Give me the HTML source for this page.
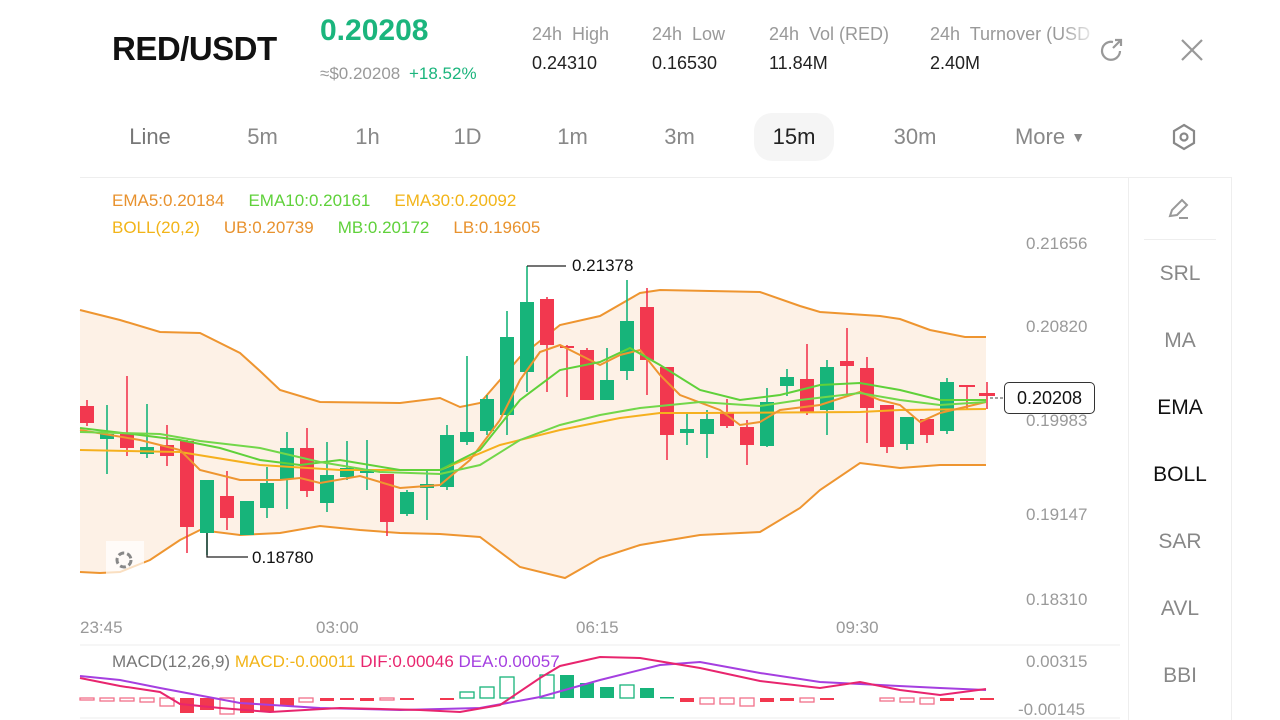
<!DOCTYPE html>
<html><head><meta charset="utf-8"><style>
*{margin:0;padding:0;box-sizing:border-box}
body{width:1280px;height:720px;overflow:hidden;background:#fff;font-family:"Liberation Sans",Arial,sans-serif;position:relative}
.a{position:absolute;white-space:nowrap}
.g{color:#999}
.tab{position:absolute;top:113px;height:48px;line-height:48px;font-size:22px;color:#888;text-align:center}
.side{position:absolute;left:1128px;width:104px;text-align:center;font-size:21px;color:#888}
.ax{position:absolute;left:1026px;font-size:17px;color:#9a9a9a}
</style></head><body>
<div class="a" style="left:112px;top:30px;font-size:33px;font-weight:bold;color:#111;letter-spacing:-0.5px">RED/USDT</div>
<div class="a" style="left:320px;top:14px;font-size:30px;font-weight:bold;color:#1bb57d">0.20208</div>
<div class="a g" style="left:320px;top:64px;font-size:17px">≈$0.20208 <span style="color:#1bb57d;margin-left:4px">+18.52%</span></div>
<div class="a g" style="left:532px;top:24px;font-size:18px">24h&nbsp; High</div>
<div class="a" style="left:532px;top:53px;font-size:18px;color:#222">0.24310</div>
<div class="a g" style="left:652px;top:24px;font-size:18px">24h&nbsp; Low</div>
<div class="a" style="left:652px;top:53px;font-size:18px;color:#222">0.16530</div>
<div class="a g" style="left:769px;top:24px;font-size:18px">24h&nbsp; Vol (RED)</div>
<div class="a" style="left:769px;top:53px;font-size:18px;color:#222">11.84M</div>
<div class="a g" style="left:930px;top:24px;font-size:18px;width:160px;overflow:hidden">24h&nbsp; Turnover (USDT)</div>
<div class="a" style="left:930px;top:53px;font-size:18px;color:#222">2.40M</div>
<div class="a" style="left:1060px;top:20px;width:40px;height:60px;background:linear-gradient(90deg,rgba(255,255,255,0),#fff)"></div>
<svg class="a" style="left:1098px;top:36px" width="28" height="28" viewBox="0 0 28 28" fill="none" stroke="#999" stroke-width="2.2"><path d="M22 15a9 9 0 1 1-7-9"/><path d="M15 12L23 4M17 4h6v6"/></svg>
<svg class="a" style="left:1180px;top:38px" width="24" height="24" viewBox="0 0 24 24" stroke="#999" stroke-width="2.2"><path d="M2 2L22 22M22 2L2 22"/></svg>

<div class="tab" style="left:120px;width:60px;color:#777">Line</div>
<div class="tab" style="left:235px;width:55px">5m</div>
<div class="tab" style="left:340px;width:55px">1h</div>
<div class="tab" style="left:440px;width:55px">1D</div>
<div class="tab" style="left:545px;width:55px">1m</div>
<div class="tab" style="left:652px;width:55px">3m</div>
<div class="tab" style="left:754px;width:80px;background:#f5f5f5;border-radius:18px;color:#222">15m</div>
<div class="tab" style="left:885px;width:60px">30m</div>
<div class="tab" style="left:1010px;width:80px">More <span style="font-size:14px;vertical-align:2px">▼</span></div>
<svg class="a" style="left:1170px;top:122px" width="28" height="30" viewBox="0 0 28 30" fill="none" stroke="#888" stroke-width="2.2"><path d="M14 3L24 9V21L14 27L4 21V9Z"/><circle cx="14" cy="15" r="3.5"/></svg>

<div class="a" style="left:80px;top:177px;width:1152px;height:1px;background:#eee"></div>
<div class="a" style="left:1128px;top:178px;width:104px;height:542px;border-left:1px solid #eee;border-right:1px solid #eee"></div>
<svg class="a" style="left:1166px;top:196px" width="28" height="26" viewBox="0 0 28 26" fill="none" stroke="#999" stroke-width="2"><path d="M4 20L6 14L16 4L21 9L11 19Z"/><path d="M13 22H22"/></svg>
<div class="a" style="left:1144px;top:239px;width:72px;height:1px;background:#eee"></div>
<div class="side" style="top:262px">SRL</div>
<div class="side" style="top:329px">MA</div>
<div class="side" style="top:396px;color:#111">EMA</div>
<div class="side" style="top:463px;color:#111">BOLL</div>
<div class="side" style="top:530px">SAR</div>
<div class="side" style="top:597px">AVL</div>
<div class="side" style="top:664px">BBI</div>

<div class="a" style="left:112px;top:191px;font-size:17px"><span style="color:#e8922e">EMA5:0.20184</span><span style="color:#5fd13a;margin-left:24px">EMA10:0.20161</span><span style="color:#f2b418;margin-left:24px">EMA30:0.20092</span></div>
<div class="a" style="left:112px;top:218px;font-size:17px"><span style="color:#f2b418">BOLL(20,2)</span><span style="color:#e8922e;margin-left:24px">UB:0.20739</span><span style="color:#5fd13a;margin-left:24px">MB:0.20172</span><span style="color:#e8922e;margin-left:24px">LB:0.19605</span></div>

<div class="ax" style="top:234px">0.21656</div>
<div class="ax" style="top:317px">0.20820</div>
<div class="ax" style="top:411px">0.19983</div>
<div class="ax" style="top:505px">0.19147</div>
<div class="ax" style="top:590px">0.18310</div>
<div class="a" style="left:80px;top:618px;font-size:17px;color:#999">23:45</div>
<div class="a" style="left:316px;top:618px;font-size:17px;color:#999">03:00</div>
<div class="a" style="left:576px;top:618px;font-size:17px;color:#999">06:15</div>
<div class="a" style="left:836px;top:618px;font-size:17px;color:#999">09:30</div>

<svg class="a" style="left:0;top:0" width="1128" height="720">
<path d="M80,310 L120,320 L160,332 L200,333 L240,353 L260,371 L280,390 L320,402 L400,403 L440,398 L460,407 L480,403 L520,357 L560,325 L600,316 L640,293 L660,290 L760,292 L800,306 L820,312 L880,316 L900,319 L930,330 L965,337 L986,337 L986,465 L940,465 L900,468 L860,463 L820,490 L800,508 L760,532 L700,535 L670,540 L640,545 L600,558 L565,578 L520,567 L480,537 L440,534 L400,533 L360,530 L320,526 L280,533 L240,535 L200,530 L180,540 L150,560 L120,572 L100,573 L80,572Z" fill="#fdf1e6"/>
<g fill="none" stroke="#ee9530" stroke-width="2">
<path d="M80,310 L120,320 L160,332 L200,333 L240,353 L260,371 L280,390 L320,402 L400,403 L440,398 L460,407 L480,403 L520,357 L560,325 L600,316 L640,293 L660,290 L760,292 L800,306 L820,312 L880,316 L900,319 L930,330 L965,337 L986,337"/>
<path d="M80,572 L100,573 L120,572 L150,560 L180,540 L200,530 L240,535 L280,533 L320,526 L360,530 L400,533 L440,534 L480,537 L520,567 L565,578 L600,558 L640,545 L670,540 L700,535 L760,532 L800,508 L820,490 L860,463 L900,468 L940,465 L986,465"/>
</g>
<g stroke-width="1.6">
<line x1="87" y1="400" x2="87" y2="426" stroke="#f2384f"/><rect x="80" y="406" width="14" height="17" fill="#f2384f"/>
<line x1="107" y1="405" x2="107" y2="474" stroke="#17b47a"/><rect x="100" y="434" width="14" height="5" fill="#17b47a"/>
<line x1="127" y1="376" x2="127" y2="456" stroke="#f2384f"/><rect x="120" y="433" width="14" height="15" fill="#f2384f"/>
<line x1="147" y1="404" x2="147" y2="458" stroke="#17b47a"/><rect x="140" y="447" width="14" height="7" fill="#17b47a"/>
<line x1="167" y1="425" x2="167" y2="466" stroke="#f2384f"/><rect x="160" y="445" width="14" height="11" fill="#f2384f"/>
<line x1="187" y1="440" x2="187" y2="553" stroke="#f2384f"/><rect x="180" y="441" width="14" height="86" fill="#f2384f"/>
<line x1="207" y1="480" x2="207" y2="555" stroke="#17b47a"/><rect x="200" y="480" width="14" height="53" fill="#17b47a"/>
<line x1="227" y1="471" x2="227" y2="530" stroke="#f2384f"/><rect x="220" y="496" width="14" height="22" fill="#f2384f"/>
<rect x="240" y="501" width="14" height="34" fill="#17b47a"/>
<line x1="267" y1="467" x2="267" y2="518" stroke="#17b47a"/><rect x="260" y="483" width="14" height="25" fill="#17b47a"/>
<line x1="287" y1="432" x2="287" y2="509" stroke="#17b47a"/><rect x="280" y="448" width="14" height="31" fill="#17b47a"/>
<line x1="307" y1="428" x2="307" y2="497" stroke="#f2384f"/><rect x="300" y="448" width="14" height="43" fill="#f2384f"/>
<line x1="327" y1="442" x2="327" y2="512" stroke="#17b47a"/><rect x="320" y="475" width="14" height="28" fill="#17b47a"/>
<line x1="347" y1="441" x2="347" y2="480" stroke="#17b47a"/><rect x="340" y="468" width="14" height="9" fill="#17b47a"/>
<line x1="367" y1="440" x2="367" y2="490" stroke="#17b47a"/><rect x="360" y="470" width="14" height="3" fill="#17b47a"/>
<line x1="387" y1="474" x2="387" y2="536" stroke="#f2384f"/><rect x="380" y="474" width="14" height="48" fill="#f2384f"/>
<line x1="407" y1="490" x2="407" y2="516" stroke="#17b47a"/><rect x="400" y="492" width="14" height="22" fill="#17b47a"/>
<line x1="427" y1="470" x2="427" y2="520" stroke="#17b47a"/><rect x="420" y="484" width="14" height="4" fill="#17b47a"/>
<line x1="447" y1="425" x2="447" y2="490" stroke="#17b47a"/><rect x="440" y="435" width="14" height="52" fill="#17b47a"/>
<line x1="467" y1="356" x2="467" y2="445" stroke="#17b47a"/><rect x="460" y="432" width="14" height="10" fill="#17b47a"/>
<line x1="487" y1="395" x2="487" y2="435" stroke="#17b47a"/><rect x="480" y="399" width="14" height="32" fill="#17b47a"/>
<line x1="507" y1="311" x2="507" y2="435" stroke="#17b47a"/><rect x="500" y="337" width="14" height="78" fill="#17b47a"/>
<line x1="527" y1="266" x2="527" y2="392" stroke="#17b47a"/><rect x="520" y="302" width="14" height="70" fill="#17b47a"/>
<line x1="547" y1="297" x2="547" y2="392" stroke="#f2384f"/><rect x="540" y="299" width="14" height="46" fill="#f2384f"/>
<line x1="567" y1="345" x2="567" y2="397" stroke="#f2384f"/><rect x="560" y="346" width="14" height="2" fill="#f2384f"/>
<line x1="587" y1="348" x2="587" y2="400" stroke="#f2384f"/><rect x="580" y="350" width="14" height="50" fill="#f2384f"/>
<line x1="607" y1="348" x2="607" y2="400" stroke="#17b47a"/><rect x="600" y="380" width="14" height="20" fill="#17b47a"/>
<line x1="627" y1="280" x2="627" y2="380" stroke="#17b47a"/><rect x="620" y="321" width="14" height="50" fill="#17b47a"/>
<line x1="647" y1="288" x2="647" y2="395" stroke="#f2384f"/><rect x="640" y="307" width="14" height="53" fill="#f2384f"/>
<line x1="667" y1="367" x2="667" y2="460" stroke="#f2384f"/><rect x="660" y="367" width="14" height="68" fill="#f2384f"/>
<line x1="687" y1="413" x2="687" y2="445" stroke="#17b47a"/><rect x="680" y="429" width="14" height="4" fill="#17b47a"/>
<line x1="707" y1="410" x2="707" y2="458" stroke="#17b47a"/><rect x="700" y="419" width="14" height="15" fill="#17b47a"/>
<line x1="727" y1="399" x2="727" y2="428" stroke="#f2384f"/><rect x="720" y="412" width="14" height="14" fill="#f2384f"/>
<line x1="747" y1="420" x2="747" y2="465" stroke="#f2384f"/><rect x="740" y="427" width="14" height="18" fill="#f2384f"/>
<line x1="767" y1="388" x2="767" y2="447" stroke="#17b47a"/><rect x="760" y="402" width="14" height="44" fill="#17b47a"/>
<line x1="787" y1="369" x2="787" y2="396" stroke="#17b47a"/><rect x="780" y="377" width="14" height="9" fill="#17b47a"/>
<line x1="807" y1="344" x2="807" y2="415" stroke="#f2384f"/><rect x="800" y="379" width="14" height="34" fill="#f2384f"/>
<line x1="827" y1="360" x2="827" y2="435" stroke="#17b47a"/><rect x="820" y="367" width="14" height="43" fill="#17b47a"/>
<line x1="847" y1="328" x2="847" y2="395" stroke="#f2384f"/><rect x="840" y="361" width="14" height="5" fill="#f2384f"/>
<line x1="867" y1="357" x2="867" y2="443" stroke="#f2384f"/><rect x="860" y="368" width="14" height="40" fill="#f2384f"/>
<line x1="887" y1="405" x2="887" y2="453" stroke="#f2384f"/><rect x="880" y="405" width="14" height="42" fill="#f2384f"/>
<line x1="907" y1="417" x2="907" y2="450" stroke="#17b47a"/><rect x="900" y="417" width="14" height="27" fill="#17b47a"/>
<line x1="927" y1="419" x2="927" y2="443" stroke="#f2384f"/><rect x="920" y="419" width="14" height="16" fill="#f2384f"/>
<line x1="947" y1="378" x2="947" y2="434" stroke="#17b47a"/><rect x="940" y="382" width="14" height="49" fill="#17b47a"/>
<line x1="967" y1="385" x2="967" y2="410" stroke="#f2384f"/><rect x="959" y="385" width="16" height="2" fill="#f2384f"/>
<line x1="987" y1="382" x2="987" y2="409" stroke="#f2384f"/><rect x="979" y="393" width="16" height="3" fill="#f2384f"/>
</g>
<g fill="none" stroke-width="2">
<path stroke="#f5b01e" d="M80,450 L180,452 L260,465 L340,470 L440,470 L500,445 L560,430 L620,418 L660,413 L700,413 L860,412 L900,410 L986,409"/>
<path stroke="#ee9530" d="M80,430 L140,440 L180,450 L200,470 L240,480 L280,480 L300,478 L320,483 L360,476 L400,488 L440,485 L470,460 L500,420 L520,380 L540,352 L560,345 L580,355 L600,365 L620,355 L640,350 L660,375 L680,395 L720,410 L740,425 L760,422 L780,410 L820,405 L860,392 L880,400 L900,405 L920,422 L940,413 L986,402"/>
<path stroke="#5fd13a" d="M80,428 L140,435 L180,440 L220,448 L260,460 L300,465 L340,460 L400,470 L440,470 L480,450 L520,400 L560,370 L600,362 L630,348 L660,365 L700,390 L740,400 L780,395 L820,385 L860,383 L900,390 L940,400 L986,400"/>
<path stroke="#72d74a" d="M80,432 L120,433 L160,434 L200,441 L260,448 L320,462 L380,472 L440,474 L480,465 L520,440 L560,425 L600,415 L640,408 L700,402 L760,406 L800,400 L860,393 L900,400 L940,405 L986,402"/>
</g>
<path d="M527,266 H566" fill="none" stroke="#222" stroke-width="1.3"/>
<path d="M207,533 V557 H248" fill="none" stroke="#222" stroke-width="1.3"/>
<path d="M990,398 H1003" stroke="#444" stroke-dasharray="3 2"/>
<line x1="80" y1="645" x2="1120" y2="645" stroke="#eee"/>
<line x1="80" y1="718" x2="1120" y2="718" stroke="#eee"/>
<g stroke-width="1.3">
<g fill="none" stroke="#f2708a">
<rect x="80" y="698" width="14" height="2"/><rect x="100" y="698" width="14" height="3"/><rect x="120" y="698" width="14" height="3"/><rect x="140" y="698" width="14" height="4"/><rect x="160" y="698" width="14" height="8"/><rect x="220" y="698" width="14" height="16"/><rect x="299" y="698" width="14" height="4"/><rect x="380" y="698" width="14" height="2"/><rect x="700" y="698" width="14" height="6"/><rect x="720" y="698" width="14" height="6"/><rect x="740" y="698" width="14" height="8"/><rect x="800" y="698" width="14" height="4"/><rect x="880" y="698" width="14" height="3"/><rect x="900" y="698" width="14" height="4"/><rect x="920" y="698" width="14" height="6"/>
</g>
<g fill="#f2384f">
<rect x="180" y="698" width="14" height="15"/><rect x="200" y="698" width="14" height="12"/><rect x="240" y="698" width="14" height="15"/><rect x="260" y="698" width="14" height="13"/><rect x="280" y="698" width="14" height="8"/><rect x="320" y="698" width="14" height="3"/><rect x="340" y="698" width="14" height="2"/><rect x="360" y="698" width="14" height="3"/><rect x="400" y="698" width="14" height="2"/><rect x="440" y="698" width="14" height="2"/><rect x="680" y="698" width="14" height="4"/><rect x="760" y="698" width="14" height="4"/><rect x="780" y="698" width="14" height="3"/><rect x="820" y="698" width="14" height="2"/><rect x="940" y="698" width="14" height="3"/><rect x="960" y="698" width="14" height="2"/><rect x="980" y="698" width="14" height="2"/>
</g>
<g fill="none" stroke="#17b47a"><rect x="460" y="692" width="14" height="6"/><rect x="480" y="687" width="14" height="11"/><rect x="500" y="677" width="14" height="21"/><rect x="540" y="675" width="14" height="23"/><rect x="620" y="685" width="14" height="13"/></g>
<g fill="#17b47a"><rect x="560" y="675" width="14" height="23"/><rect x="580" y="683" width="14" height="15"/><rect x="600" y="687" width="14" height="11"/><rect x="640" y="688" width="14" height="10"/><rect x="660" y="697" width="14" height="1.5"/></g>
</g>
<path fill="none" stroke="#a53fe0" stroke-width="2" d="M80,676 L120,680 L160,688 L240,703 L320,708 L400,710 L480,708 L540,697 L600,680 L660,665 L700,662 L760,673 L820,682 L880,685 L940,688 L986,690"/>
<path fill="none" stroke="#e8256e" stroke-width="2" d="M80,678 L120,686 L160,692 L180,704 L220,708 L270,712 L340,708 L420,710 L460,712 L500,705 L540,678 L560,666 L600,657 L640,658 L700,668 L760,681 L820,688 L860,682 L900,690 L940,695 L986,689"/>
<rect x="106" y="541" width="38" height="38" fill="#fff" opacity="0.7"/>
<circle cx="124" cy="560" r="7" fill="none" stroke="#888" stroke-width="3" stroke-dasharray="6 3"/>
</svg>
<div class="a" style="left:572px;top:256px;font-size:17px;color:#111">0.21378</div>
<div class="a" style="left:252px;top:548px;font-size:17px;color:#111">0.18780</div>
<div class="a" style="left:1004px;top:382px;width:91px;height:32px;border:1px solid #333;border-radius:5px;background:#fff;font-size:18px;line-height:30px;text-align:center;color:#111">0.20208</div>
<div class="ax" style="top:652px">0.00315</div>
<div class="ax" style="top:700px;left:1018px">-0.00145</div>
<div class="a" style="left:112px;top:652px;font-size:17px"><span style="color:#777">MACD(12,26,9)</span> <span style="color:#f2b418">MACD:-0.00011</span> <span style="color:#e8256e">DIF:0.00046</span> <span style="color:#a53fe0">DEA:0.00057</span></div>
</body></html>
